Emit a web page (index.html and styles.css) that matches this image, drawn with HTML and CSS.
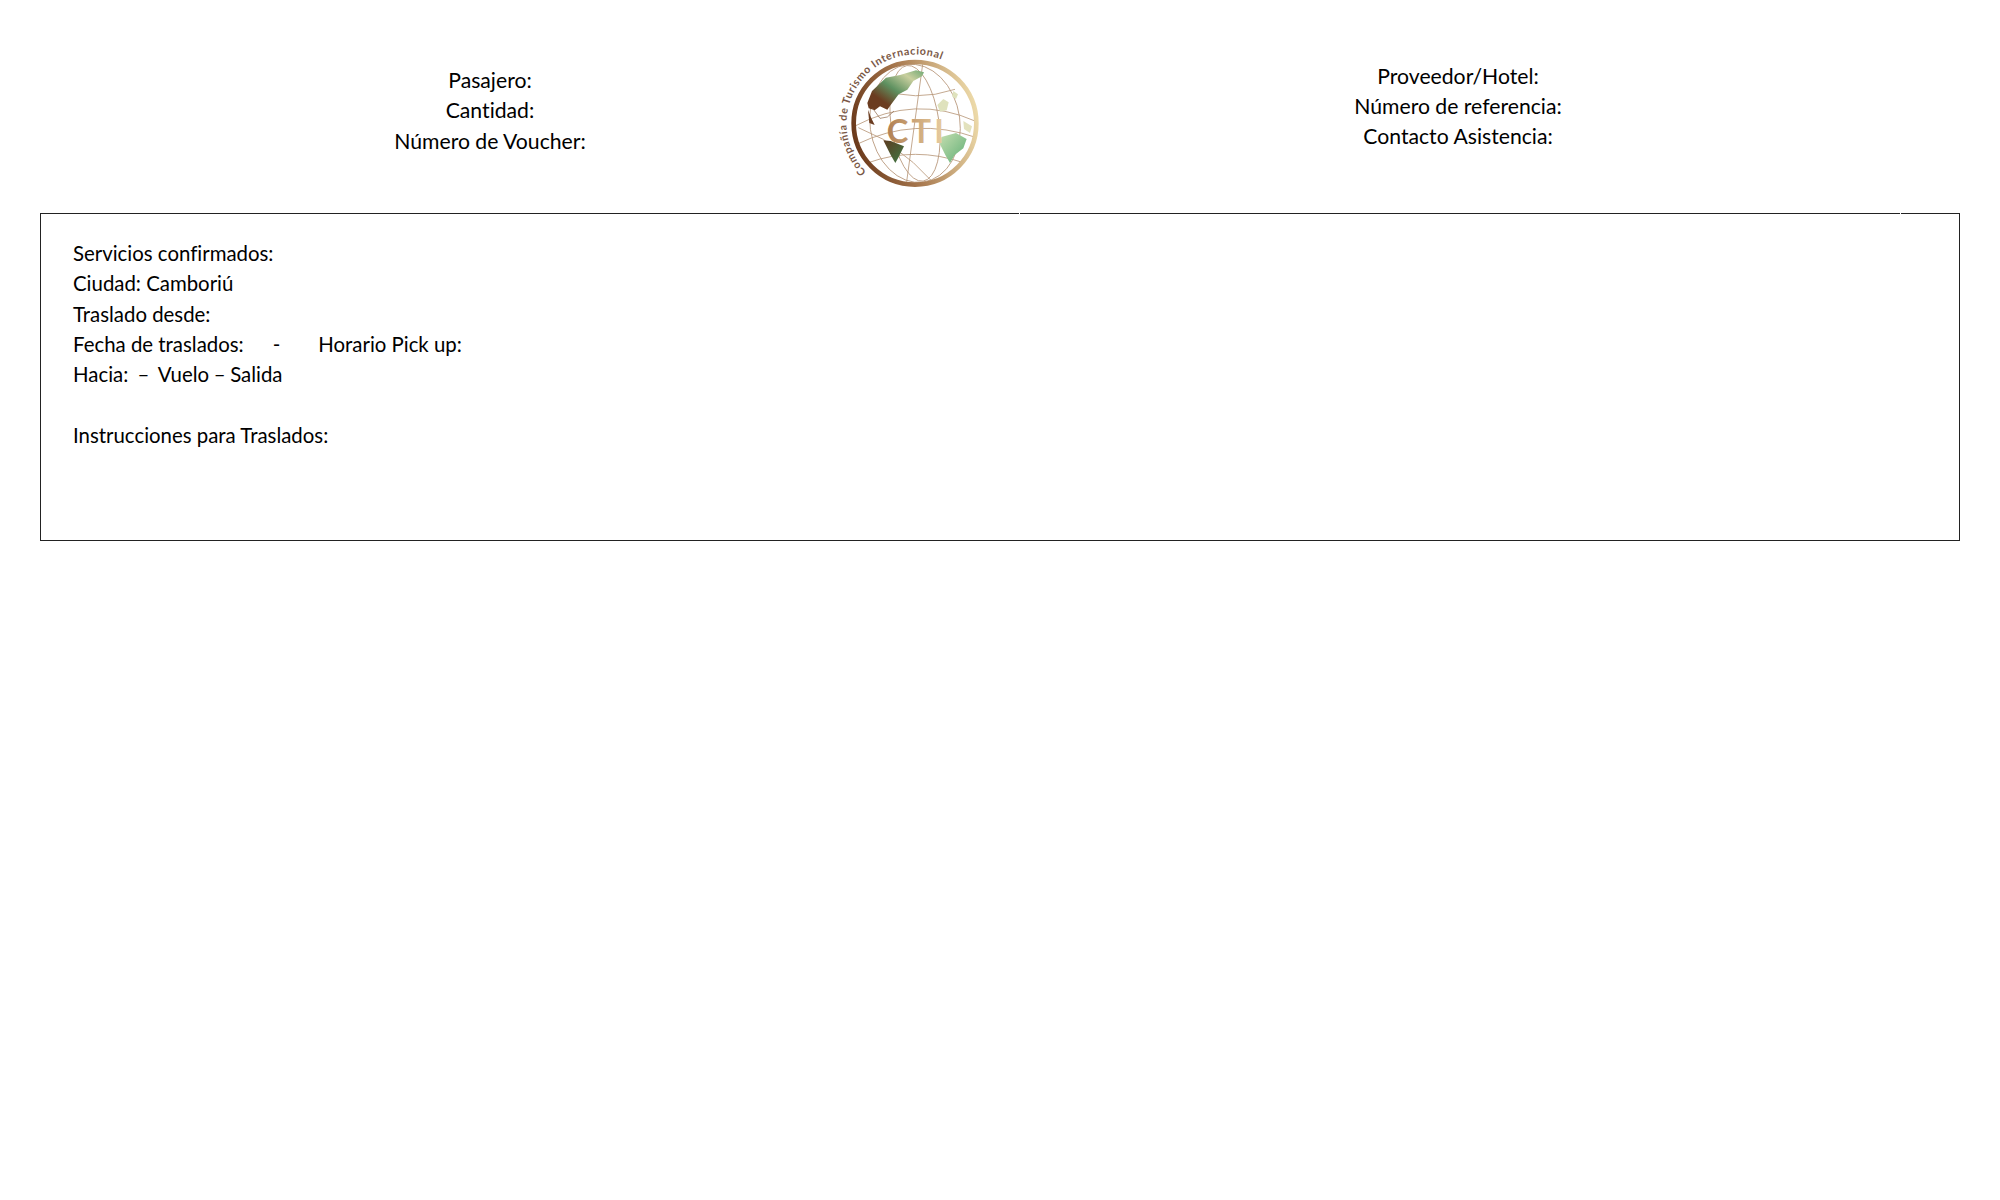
FILE: index.html
```html
<!DOCTYPE html>
<html lang="es">
<head>
<meta charset="utf-8">
<title>Voucher</title>
<link rel="stylesheet" href="styles.css">
</head>
<body>
<header class="header">
  <div class="info info-left">
    <div>Pasajero:</div>
    <div>Cantidad:</div>
    <div>Número de Voucher:</div>
  </div>
  <svg class="logo" viewBox="0 0 600 510" aria-label="Compañía de Turismo Internacional">
    <defs>
      <linearGradient id="ring" x1="0" y1="0.6" x2="1" y2="0.4">
        <stop offset="0" stop-color="#6b3a1c"/>
        <stop offset="0.45" stop-color="#a8794f"/>
        <stop offset="1" stop-color="#ecd9a8"/>
      </linearGradient>
      <linearGradient id="cti" x1="0" y1="0" x2="1" y2="0">
        <stop offset="0" stop-color="#b07f52"/>
        <stop offset="1" stop-color="#e8cda0"/>
      </linearGradient>
      <linearGradient id="na" x1="0" y1="1" x2="1" y2="0">
        <stop offset="0" stop-color="#6b3c20"/>
        <stop offset="0.25" stop-color="#6b3c20"/>
        <stop offset="0.5" stop-color="#5e9160"/>
        <stop offset="0.78" stop-color="#c9cf9f"/>
        <stop offset="1" stop-color="#6ea873"/>
      </linearGradient>
      <linearGradient id="sa" x1="0" y1="0" x2="1" y2="1">
        <stop offset="0" stop-color="#5c3a20"/>
        <stop offset="1" stop-color="#3f7a45"/>
      </linearGradient>
      <linearGradient id="af" x1="0" y1="0" x2="1" y2="1">
        <stop offset="0" stop-color="#c5deb0"/>
        <stop offset="1" stop-color="#5fae75"/>
      </linearGradient>
      <path id="arc" d="M199 423 A207 207 0 0 1 422 85"/>
    </defs>
    <g class="grid-lines">
      <ellipse cx="345" cy="277" rx="72" ry="175" transform="rotate(-8 345 277)"/>
      <ellipse cx="345" cy="277" rx="135" ry="178" transform="rotate(-8 345 277)"/>
      <line x1="368" y1="100" x2="320" y2="452"/>
      <path d="M232 172 Q345 215 465 175"/>
      <path d="M165 285 Q345 190 525 270"/>
      <path d="M170 340 Q345 255 530 320"/>
      <path d="M205 395 Q345 345 490 395"/>
      <path d="M175 290 L250 325 L340 395 L395 450"/>
    </g>
    <path fill="url(#na)" d="M202 216 L216 180 L258 140 L300 132 L348 118 L372 124 L366 136 L340 150 L322 176 L296 190 L272 222 L262 236 L240 226 L224 238 L206 232 Z"/>
    <path fill="#6b3c20" d="M204 236 L214 262 L224 282 L208 276 Z"/>
    <path class="coast" d="M218 232 L240 262 L262 258 L282 240"/>
    <path fill="url(#sa)" d="M250 328 L272 330 L312 346 L296 378 L286 396 L272 372 Z"/>
    <path fill="url(#af)" d="M424 318 L468 306 L500 324 L490 352 L464 372 L450 396 L436 372 L420 340 Z"/>
    <path fill="#dfe2bd" d="M412 222 L430 204 L446 214 L440 238 L420 242 Z"/>
    <path fill="#dfe2bd" d="M460 180 L474 190 L468 204 L456 196 Z"/>
    <path fill="#e3e2bd" d="M490 270 L516 286 L510 306 L492 294 Z"/>
    <circle class="ring" cx="345" cy="277" r="184"/>
    <text class="logo-mark" x="260" y="335" textLength="172">CTI</text>
    <text class="logo-arc"><textPath href="#arc" textLength="565" lengthAdjust="spacing">Compañía de Turismo Internacional</textPath></text>
  </svg>
  <div class="info info-right">
    <div>Proveedor/Hotel:</div>
    <div>Número de referencia:</div>
    <div>Contacto Asistencia:</div>
  </div>
</header>
<main class="box">
  <span class="notch notch-a"></span>
  <span class="notch notch-b"></span>
  <div>Servicios confirmados:</div>
  <div>Ciudad: Camboriú</div>
  <div>Traslado desde:</div>
  <div>Fecha de traslados:<span class="dash">-</span><span class="pickup">Horario Pick up:</span></div>
  <div class="pre">Hacia:  –  Vuelo – Salida</div>
  <div class="blank"></div>
  <div>Instrucciones para Traslados:</div>
</main>
</body>
</html>
```

FILE: styles.css
```css
html, body {
  margin: 0;
  padding: 0;
  background: #fff;
}

body {
  font-family: "Lato", "Liberation Sans", sans-serif;
  font-size: 20.4px;
  line-height: 30.35px;
  color: #000;
  font-variant-ligatures: none;
}

.header {
  display: flex;
  height: 213px;
}

.info {
  text-align: center;
  box-sizing: border-box;
  font-size: 21.2px;
}

.info-left {
  width: 800px;
  padding-left: 180px;
  padding-top: 65px;
}

.info-right {
  width: 916px;
  padding-top: 60.5px;
}

.logo {
  width: 200px;
  height: 170px;
  margin-top: 31px;
  flex: none;
}

.grid-lines {
  fill: none;
  stroke: #b8977a;
  stroke-width: 2.5;
}

.coast {
  fill: none;
  stroke: #8a6244;
  stroke-width: 2;
}

.ring {
  fill: none;
  stroke: url(#ring);
  stroke-width: 14;
}

.logo-mark {
  font-family: "Lato", sans-serif;
  font-size: 98px;
  font-weight: 700;
  fill: url(#cti);
}

.logo-arc {
  font-family: "Lato", sans-serif;
  font-size: 32px;
  font-weight: 700;
  fill: #7a5846;
}

.box {
  position: relative;
  box-sizing: border-box;
  margin-left: 40px;
  width: 1920px;
  height: 328px;
  padding: 24px 32px 0;
  border: 1px solid #222;
}

.notch {
  position: absolute;
  top: -1px;
  width: 1px;
  height: 1px;
  background: #fff;
}

.notch-a {
  left: 978px;
}

.notch-b {
  left: 1859px;
}

.dash {
  margin-left: 29px;
}

.pickup {
  margin-left: 38px;
}

.pre {
  white-space: pre;
  word-spacing: -0.6px;
}

.blank {
  height: 30.35px;
}
```
